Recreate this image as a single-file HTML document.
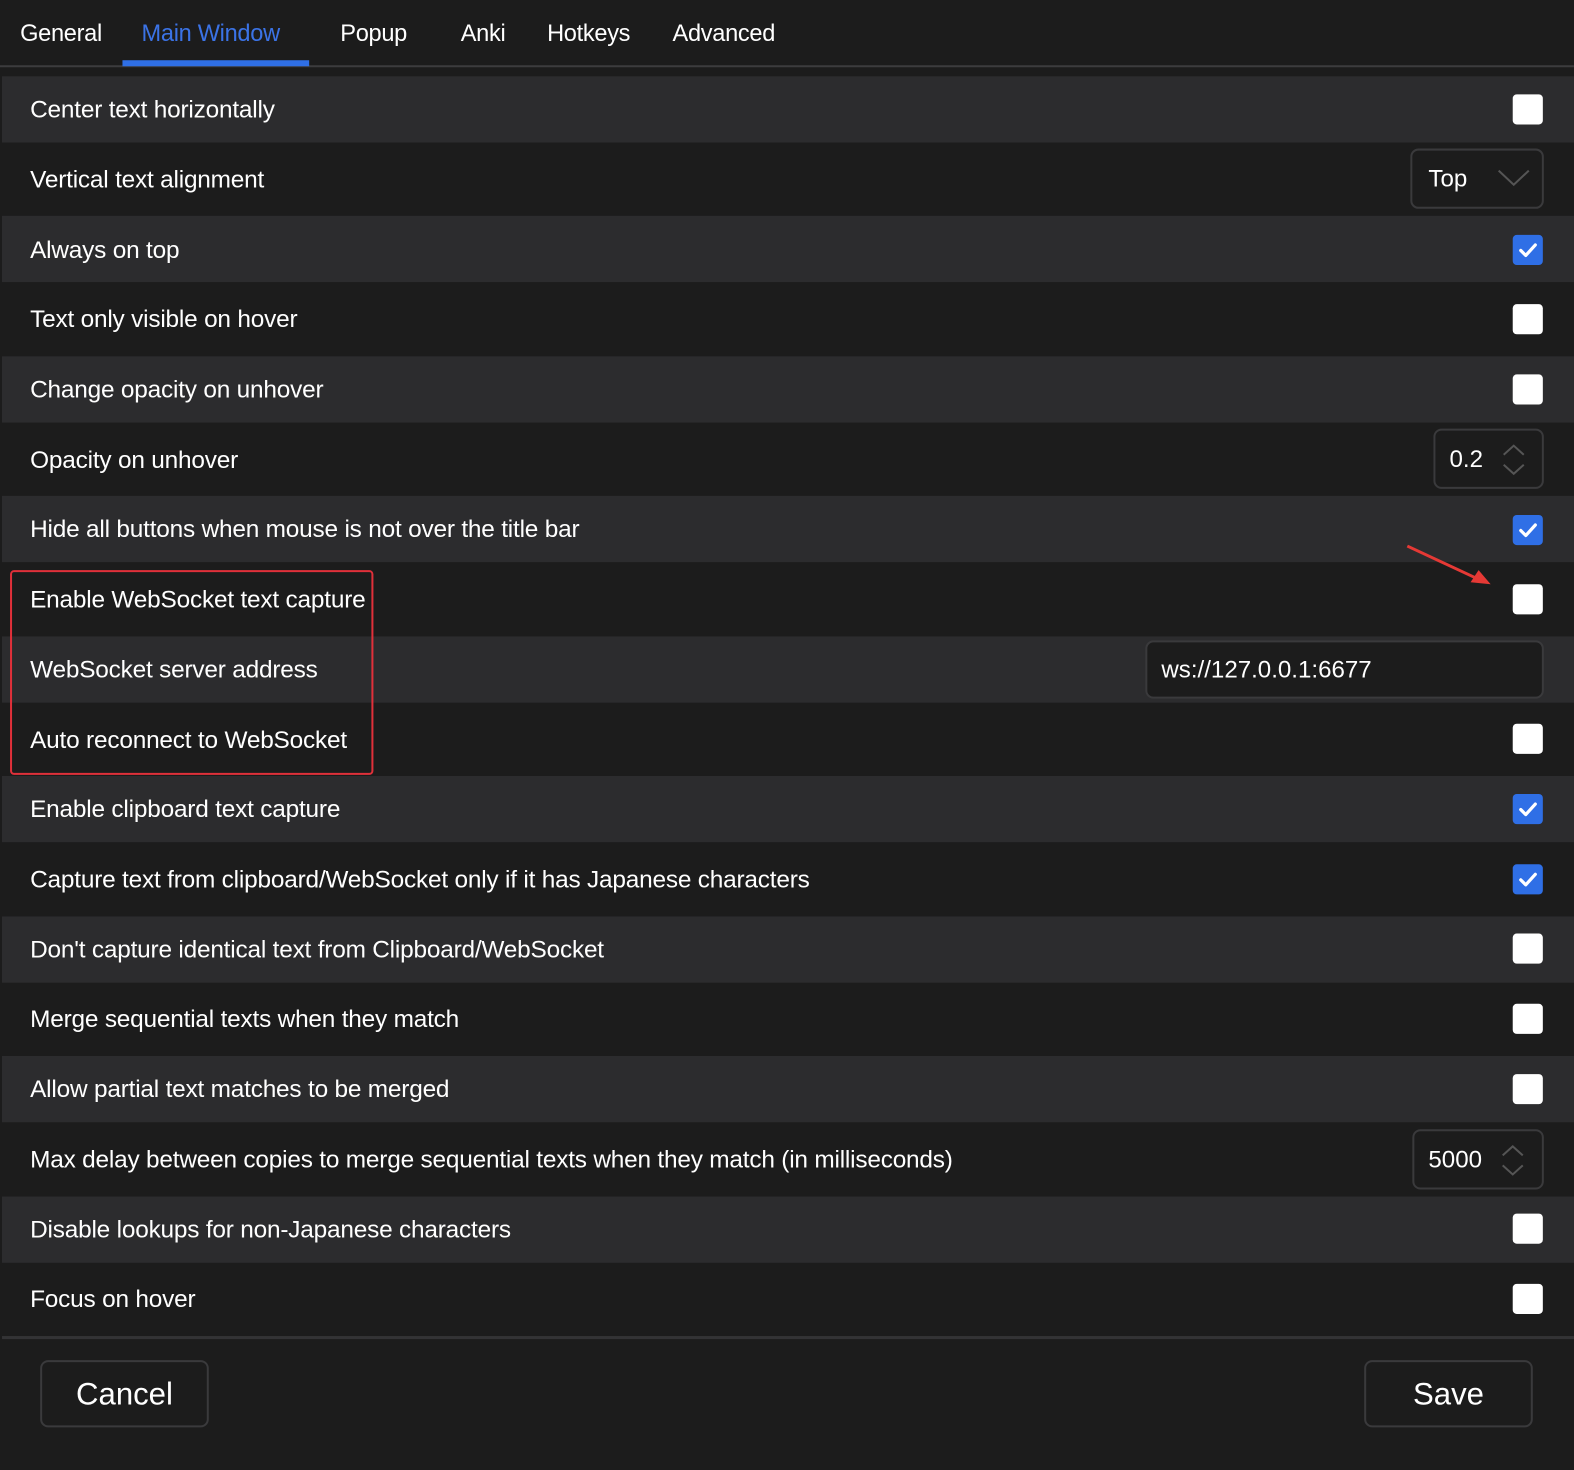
<!DOCTYPE html>
<html><head><meta charset="utf-8"><style>
*{margin:0;padding:0;box-sizing:border-box}
body{width:1574px;height:1469px;background:#1c1c1c;color:#fff;font-family:"Liberation Sans",sans-serif;overflow:hidden}
#w{position:relative;width:1568px;height:1464px;transform:scale(1.0038);transform-origin:0 0}
.tab{position:absolute;top:20px;font-size:23.5px;letter-spacing:-0.3px}
.row{position:absolute;left:2px;right:0;height:66px}
.l{background:#2c2c2e}
.t{position:absolute;left:30px;font-size:24.3px;letter-spacing:-0.2px;transform:translateY(-50%);white-space:nowrap}
.cb{position:absolute;left:1507px;width:30px;height:30px;border-radius:4px;background:#fff;transform:translateY(-50%)}
.cb.on{background:#2f6fe6}
.box{position:absolute;border:2px solid #3a3a3c;border-radius:8px;background:#1c1c1c;font-size:24px;transform:translateY(-50%)}
.btn{position:absolute;top:1355px;width:168px;height:67px;border:2px solid #3a3a3c;border-radius:8px;font-size:31px;display:flex;align-items:center;justify-content:center}
</style></head><body><div id="w">
<div class="tab" style="left:20px">General</div>
<div class="tab" style="left:141px;color:#3b73e6">Main Window</div>
<div class="tab" style="left:339px">Popup</div>
<div class="tab" style="left:459px">Anki</div>
<div class="tab" style="left:545px">Hotkeys</div>
<div class="tab" style="left:670px">Advanced</div>
<div style="position:absolute;left:0;right:0;top:65px;height:2px;background:#3c3c3e"></div>
<div style="position:absolute;left:122px;width:186px;top:60px;height:6px;background:#2f6fe6"></div>

<div class="row l" style="top:76px"></div>
<div class="row l" style="top:215px"></div>
<div class="row l" style="top:355px"></div>
<div class="row l" style="top:494px"></div>
<div class="row l" style="top:634px"></div>
<div class="row l" style="top:773px"></div>
<div class="row l" style="top:913px"></div>
<div class="row l" style="top:1052px"></div>
<div class="row l" style="top:1192px"></div>

<div class="t" style="top:110px">Center text horizontally</div>
<div class="t" style="top:180px">Vertical text alignment</div>
<div class="t" style="top:250px">Always on top</div>
<div class="t" style="top:319px">Text only visible on hover</div>
<div class="t" style="top:389px">Change opacity on unhover</div>
<div class="t" style="top:459px">Opacity on unhover</div>
<div class="t" style="top:528px">Hide all buttons when mouse is not over the title bar</div>
<div class="t" style="top:598px">Enable WebSocket text capture</div>
<div class="t" style="top:668px">WebSocket server address</div>
<div class="t" style="top:738px">Auto reconnect to WebSocket</div>
<div class="t" style="top:807px">Enable clipboard text capture</div>
<div class="t" style="top:877px">Capture text from clipboard/WebSocket only if it has Japanese characters</div>
<div class="t" style="top:947px">Don't capture identical text from Clipboard/WebSocket</div>
<div class="t" style="top:1016px">Merge sequential texts when they match</div>
<div class="t" style="top:1086px">Allow partial text matches to be merged</div>
<div class="t" style="top:1156px">Max delay between copies to merge sequential texts when they match (in milliseconds)</div>
<div class="t" style="top:1226px">Disable lookups for non-Japanese characters</div>
<div class="t" style="top:1295px">Focus on hover</div>

<div class="cb" style="top:109px"></div>
<div class="box" style="top:178px;left:1405px;width:133px;height:60px"><span style="position:absolute;left:16px;top:15px">Top</span>
<svg style="position:absolute;left:84px;top:16px" width="34" height="22"><path d="M2 4 L17 18 L32 4" stroke="#555" stroke-width="2" fill="none"/></svg></div>
<div class="cb on" style="top:249px"><svg width="30" height="30"><path d="M8 15.5 L13 20.5 L22.5 10" stroke="#fff" stroke-width="3.2" fill="none" stroke-linecap="round" stroke-linejoin="round"/></svg></div>
<div class="cb" style="top:318px"></div>
<div class="cb" style="top:388px"></div>
<div class="box" style="top:457px;left:1428px;width:110px;height:60px"><span style="position:absolute;left:14px;top:15px">0.2</span>
<svg style="position:absolute;left:66px;top:12px" width="24" height="34"><path d="M2 12 L12 3 L22 12 M2 22 L12 31 L22 22" stroke="#555" stroke-width="2" fill="none"/></svg></div>
<div class="cb on" style="top:528px"><svg width="30" height="30"><path d="M8 15.5 L13 20.5 L22.5 10" stroke="#fff" stroke-width="3.2" fill="none" stroke-linecap="round" stroke-linejoin="round"/></svg></div>
<div class="cb" style="top:597px"></div>
<div class="box" style="top:667px;left:1141px;width:397px;height:58px"><span style="position:absolute;left:14px;top:14px">ws://127.0.0.1:6677</span></div>
<div class="cb" style="top:736px"></div>
<div class="cb on" style="top:806px"><svg width="30" height="30"><path d="M8 15.5 L13 20.5 L22.5 10" stroke="#fff" stroke-width="3.2" fill="none" stroke-linecap="round" stroke-linejoin="round"/></svg></div>
<div class="cb on" style="top:876px"><svg width="30" height="30"><path d="M8 15.5 L13 20.5 L22.5 10" stroke="#fff" stroke-width="3.2" fill="none" stroke-linecap="round" stroke-linejoin="round"/></svg></div>
<div class="cb" style="top:945px"></div>
<div class="cb" style="top:1015px"></div>
<div class="cb" style="top:1085px"></div>
<div class="box" style="top:1155px;left:1407px;width:131px;height:60px"><span style="position:absolute;left:14px;top:15px">5000</span>
<svg style="position:absolute;left:86px;top:12px" width="24" height="34"><path d="M2 12 L12 3 L22 12 M2 22 L12 31 L22 22" stroke="#555" stroke-width="2" fill="none"/></svg></div>
<div class="cb" style="top:1224px"></div>
<div class="cb" style="top:1294px"></div>

<div style="position:absolute;left:10px;top:568px;width:362px;height:204px;border:2px solid #e0303a;border-radius:4px"></div>
<svg style="position:absolute;left:1395px;top:538px" width="100" height="50"><path d="M7 6 L80 40" stroke="#e53935" stroke-width="3"/><path d="M90 44 L70 42 L78 30 Z" fill="#e53935"/></svg>

<div style="position:absolute;left:2px;right:0;top:1331px;height:3px;background:#333335"></div>
<div class="btn" style="left:40px">Cancel</div>
<div class="btn" style="left:1359px">Save</div>
</div></body></html>
